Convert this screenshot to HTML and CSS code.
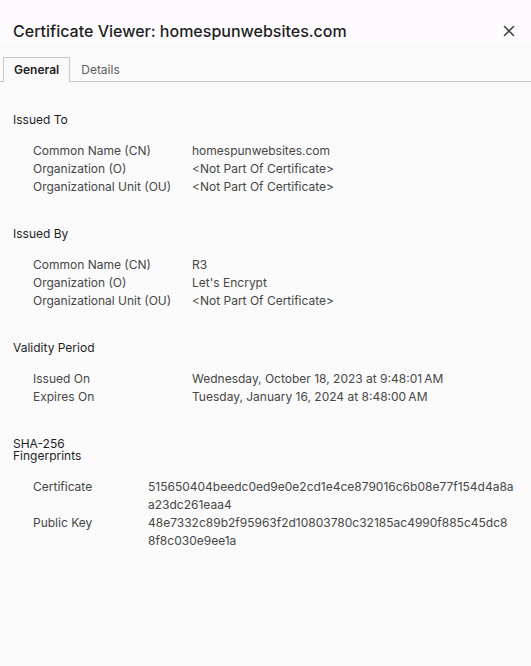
FILE: index.html
```html
<!DOCTYPE html>
<html>
<head>
<meta charset="utf-8">
<link rel="stylesheet" href="styles.css">
</head>
<body>
<div class="dialog">
  <header class="titlebar">
    <h1 class="title">Certificate Viewer: homespunwebsites.com</h1>
    <button class="close" aria-label="Close">
      <svg width="12" height="12" viewBox="0 0 12 12"><path d="M1.5 1.5L10.5 10.5M10.5 1.5L1.5 10.5" stroke="#474747" stroke-width="1.6" stroke-linecap="round"/></svg>
    </button>
  </header>
  <nav class="tabs">
    <div class="tab active">General</div>
    <div class="tab">Details</div>
  </nav>
  <main class="content">
    <section class="section">
      <h2 class="heading">Issued To</h2>
      <div class="rows">
        <div class="label">Common Name (CN)</div><div class="value">homespunwebsites.com</div>
        <div class="label">Organization (O)</div><div class="value">&lt;Not Part Of Certificate&gt;</div>
        <div class="label">Organizational Unit (OU)</div><div class="value">&lt;Not Part Of Certificate&gt;</div>
      </div>
    </section>
    <section class="section">
      <h2 class="heading">Issued By</h2>
      <div class="rows">
        <div class="label">Common Name (CN)</div><div class="value">R3</div>
        <div class="label">Organization (O)</div><div class="value">Let's Encrypt</div>
        <div class="label">Organizational Unit (OU)</div><div class="value">&lt;Not Part Of Certificate&gt;</div>
      </div>
    </section>
    <section class="section">
      <h2 class="heading">Validity Period</h2>
      <div class="rows">
        <div class="label">Issued On</div><div class="value">Wednesday, October 18, 2023 at 9:48:01&#8239;AM</div>
        <div class="label">Expires On</div><div class="value">Tuesday, January 16, 2024 at 8:48:00&#8239;AM</div>
      </div>
    </section>
    <section class="section">
      <h2 class="heading narrow">SHA-256 Fingerprints</h2>
      <div class="rows fp">
        <div class="label">Certificate</div><div class="value hash"><span class="line">515650404beedc0ed9e0e2cd1e4ce879016c6b08e77f154d4a8a</span><span class="line">a23dc261eaa4</span></div>
        <div class="label">Public Key</div><div class="value hash"><span class="line">48e7332c89b2f95963f2d10803780c32185ac4990f885c45dc8</span><span class="line">8f8c030e9ee1a</span></div>
      </div>
    </section>
  </main>
</div>
</body>
</html>
```
FILE: styles.css
```css
* { box-sizing: border-box; }
html, body {
  margin: 0;
  padding: 0;
  height: 100%;
}
body {
  background: #fafafa;
  font-family: Inter, "Noto Sans", sans-serif;
  color: #1f1f1f;
}
.dialog {
  display: flex;
  flex-direction: column;
  min-height: 100%;
}
.titlebar {
  background: #fdfbfe;
  height: 44px;
  display: flex;
  align-items: center;
  justify-content: space-between;
  padding: 18px 16px 0 13px;
}
.title {
  margin: 0;
  font-size: 16px;
  font-weight: 500;
  color: #1f1f1f;
  letter-spacing: 0;
}
.close {
  border: 0;
  background: none;
  padding: 0;
  width: 12px;
  height: 12px;
  display: flex;
}
.tabs {
  display: flex;
  margin-top: 13px;
  padding-left: 3px;
  border-bottom: 1px solid #c7c7c7;
  height: 25px;
}
.tab {
  font-size: 12px;
  padding: 0 10px;
  line-height: 24px;
  color: #5e5e5e;
  border: 1px solid transparent;
  border-bottom: 0;
}
.tab.active {
  color: #1f1f1f;
  font-weight: 600;
  border-color: #c7c7c7;
  background: #fafafa;
  margin-bottom: -1px;
  height: 25px;
}
.content {
  padding: 31px 13px 0 13px;
}
.section {
  margin-bottom: 31px;
}
.heading {
  margin: 0 0 15px 0;
  font-size: 12px;
  font-weight: 400;
  line-height: 14px;
  color: #1f1f1f;
}
.heading.narrow {
  width: 80px;
  line-height: 12px;
  padding-top: 1px;
  margin-bottom: 16px;
}
.rows {
  display: grid;
  grid-template-columns: 159px 1fr;
  padding-left: 20px;
  font-size: 12px;
  line-height: 18px;
  color: #474747;
}
.rows.fp {
  grid-template-columns: 115px 1fr;
}
.hash .line {
  display: block;
}
```
